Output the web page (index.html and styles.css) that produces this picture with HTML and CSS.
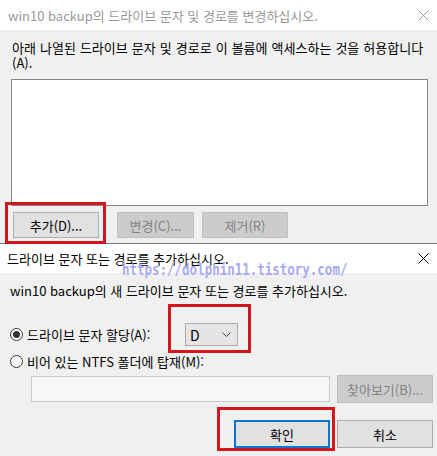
FILE: index.html
```html
<!DOCTYPE html>
<html lang="ko">
<head>
    <meta charset="UTF-8">
    <title>드라이브 문자 및 경로 변경</title>
    <link rel="stylesheet" href="styles.css">
</head>
<body>

    <!-- first dialog: change drive letter -->
    <div class="dialog first">
        <div class="titlebar inactive">
            <span>win10 backup의 드라이브 문자 및 경로를 변경하십시오.</span>
            <svg class="close" width="11" height="11" viewBox="0 0 11 11"><path d="M0.5 0.5 L10.5 10.5 M10.5 0.5 L0.5 10.5" stroke="currentColor" stroke-width="1"/></svg>
        </div>
        <div class="content">
            <p class="desc spaced">아래 나열된 드라이브 문자 및 경로로 이 볼륨에 액세스하는 것을 허용합니다 (A).</p>
            <div class="listbox"></div>
            <div class="btn-row">
                <button class="btn">추가(D)...</button>
                <button class="btn disabled">변경(C)...</button>
                <button class="btn disabled">제거(R)</button>
            </div>
        </div>
    </div>

    <!-- second dialog: add drive letter -->
    <div class="dialog second">
        <div class="titlebar">
            <span>드라이브 문자 또는 경로를 추가하십시오.</span>
            <svg class="close" width="11" height="11" viewBox="0 0 11 11"><path d="M0.5 0.5 L10.5 10.5 M10.5 0.5 L0.5 10.5" stroke="currentColor" stroke-width="1"/></svg>
        </div>
        <div class="content">
            <p class="desc">win10 backup의 새 드라이브 문자 또는 경로를 추가하십시오.</p>

            <div class="opt-row first-opt">
                <span class="radio checked"></span>
                <span class="opt-label wide">드라이브 문자 할당(A):</span>
                <div class="combo">
                    <span>D</span>
                    <svg width="9" height="5" viewBox="0 0 9 5"><polyline points="0.5,0.5 4.5,4.5 8.5,0.5" fill="none" stroke="#444" stroke-width="1"/></svg>
                </div>
            </div>

            <div class="opt-row second-opt">
                <span class="radio"></span>
                <span class="opt-label">비어 있는 NTFS 폴더에 탑재(M):</span>
            </div>

            <div class="path-row">
                <div class="textbox"></div>
                <button class="btn wide disabled">찾아보기(B)...</button>
            </div>

            <div class="footer">
                <button class="btn wide default">확인</button>
                <button class="btn wide">취소</button>
            </div>
        </div>
    </div>

    <!-- annotations -->
    <div class="mark mark-add"></div>
    <div class="mark mark-combo"></div>
    <div class="mark mark-ok"></div>
    <div class="watermark">https://dolphin11.tistory.com/</div>

</body>
</html>
```

FILE: styles.css
```css
body {
    margin: 0;
    width: 437px;
    height: 456px;
    background: #f0f0f0;
    font-family: "Noto Sans CJK KR", "Noto Sans", sans-serif;
    font-size: 13px;
    color: #000;
    position: relative;
    overflow: hidden;
}

p {
    margin: 0;
}

/* title bars */
.titlebar {
    background: #fff;
    display: flex;
    align-items: center;
    justify-content: space-between;
    padding: 0 8px 0 8px;
    height: 30px;
}

.titlebar.inactive {
    color: #999;
}

.second .titlebar {
    height: 29px;
    padding-left: 7px;
    padding-right: 8px;
}

.close {
    display: block;
}

/* first dialog */
.first {
    height: 243px;
}

.first .content {
    padding: 10px 9px 0 11px;
}

.desc {
    line-height: 15px;
    padding-left: 1px;
    word-break: keep-all;
}

.desc.spaced {
    word-spacing: 0.4px;
}

.listbox {
    margin-top: 9px;
    height: 127px;
    background: #fff;
    border: 1px solid #828790;
    box-sizing: border-box;
}

.btn-row {
    display: flex;
    gap: 8px;
    margin-top: 6px;
    padding-left: 2px;
}

.btn-row .btn:first-child {
    margin-right: 10px;
}

.btn-row .btn:nth-child(2) {
    width: 77px;
}

/* buttons */
.btn {
    font: inherit;
    width: 86px;
    height: 26px;
    background: #e1e1e1;
    border: 1px solid #adadad;
    color: #000;
    padding: 0;
    box-sizing: border-box;
}

.btn.wide {
    width: 96px;
    height: 28px;
}

.btn.disabled {
    background: #cccccc;
    border-color: #bfbfbf;
    color: #838383;
}

.btn.default {
    border: 2px solid #0078d7;
}

/* second dialog */
.second {
    border-top: 1px solid #7a7a7a;
}

.second .content {
    padding: 10px 4px 0 10px;
}

.second .desc {
    padding-left: 0;
}

.opt-row {
    display: flex;
    align-items: center;
}

.first-opt {
    margin-top: 25px;
    height: 23px;
}

.second-opt {
    margin-top: 7px;
    height: 16px;
}

.radio {
    width: 13px;
    height: 13px;
    border: 1px solid #333;
    border-radius: 50%;
    background: #fff;
    box-sizing: border-box;
    position: relative;
    flex-shrink: 0;
}

.radio.checked::after {
    content: "";
    position: absolute;
    left: 2px;
    top: 2px;
    width: 7px;
    height: 7px;
    border-radius: 50%;
    background: #333;
}

.opt-label {
    margin-left: 4px;
}

.opt-label.wide {
    width: 158px;
}

.combo {
    width: 53px;
    height: 23px;
    background: #e5e5e5;
    border: 1px solid #acacac;
    box-sizing: border-box;
    display: flex;
    align-items: center;
    justify-content: space-between;
    padding: 0 6px 0 4px;
    font-size: 14px;
}

.path-row {
    display: flex;
    align-items: center;
    gap: 7px;
    margin-top: 6px;
    padding-left: 21px;
}

.textbox {
    width: 299px;
    height: 26px;
    background: #f7f7f7;
    border: 1px solid #cccccc;
    box-sizing: border-box;
}

.footer {
    display: flex;
    justify-content: flex-end;
    gap: 7px;
    margin-top: 17px;
}

/* red annotation boxes */
.mark {
    position: absolute;
    border: 3px solid #d3151d;
    box-sizing: border-box;
}

.mark-add {
    left: 5px;
    top: 202px;
    width: 101px;
    height: 42px;
}

.mark-combo {
    left: 168px;
    top: 304px;
    width: 83px;
    height: 49px;
}

.mark-ok {
    left: 217px;
    top: 407px;
    width: 118px;
    height: 44px;
}

/* blog watermark */
.watermark {
    position: absolute;
    left: 122px;
    top: 260px;
    font-family: "DejaVu Sans Mono", monospace;
    font-weight: bold;
    font-size: 16px;
    color: #a9a9f2;
    transform: scaleX(0.78);
    transform-origin: left top;
    white-space: nowrap;
}
```
